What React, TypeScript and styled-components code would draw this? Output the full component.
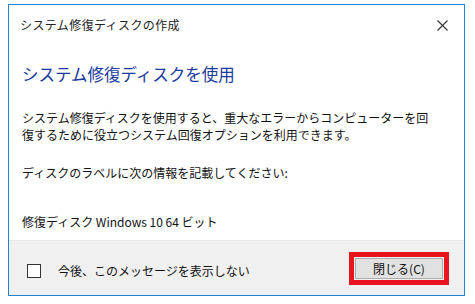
import React from "react";
import styled, { createGlobalStyle } from "styled-components";

const Global = createGlobalStyle`
  html, body { margin: 0; padding: 0; background: #ffffff; }
  body { font-family: "Noto Sans CJK JP", "Noto Sans", sans-serif; }
`;

const Page = styled.div`
  padding: 4px 0 0 8px;
`;

const Window = styled.div`
  box-sizing: border-box;
  width: 457px;
  height: 292px;
  border: 1px solid #1883d7;
  background: #ffffff;
  display: flex;
  flex-direction: column;
`;

const TitleBar = styled.div`
  height: 40px;
  display: flex;
  align-items: center;
  justify-content: space-between;
  padding: 0 12px 0 11px;
`;

const Title = styled.span`
  font-size: 12px;
  line-height: 16px;
  color: #222222;
  letter-spacing: 0.4px;
`;

const CloseButton = styled.span`
  width: 20px;
  height: 20px;
  display: flex;
  align-items: center;
  justify-content: center;
`;

const Content = styled.div`
  flex: 1;
  padding: 17px 0 0 13px;
  display: flex;
  flex-direction: column;
`;

const Heading = styled.div`
  font-size: 16.5px;
  line-height: 24px;
  color: #1a3a9e;
`;

const Text = styled.div<{ $gap: number }>`
  margin-top: ${(p) => p.$gap}px;
  font-size: 12px;
  line-height: 17px;
  color: #111111;
`;

const Footer = styled.div`
  height: 55px;
  background: #f0f0f0;
  border-top: 1px solid #e6e6e6;
  box-sizing: border-box;
  display: flex;
  align-items: center;
  padding: 0 21px 0 18px;
`;

const CheckRow = styled.label`
  display: flex;
  align-items: center;
  gap: 17px;
  margin-top: 5px;
  flex: 1;
`;

const Box = styled.span`
  box-sizing: border-box;
  width: 14px;
  height: 14px;
  border: 1px solid #333333;
  background: #ffffff;
`;

const CheckLabel = styled.span`
  font-size: 12px;
  line-height: 16px;
  color: #111111;
`;

const Button = styled.button`
  box-sizing: border-box;
  width: 88px;
  height: 21px;
  background: #e1e1e1;
  border: 1px solid #adadad;
  font-family: "Noto Sans CJK JP", "Noto Sans", sans-serif;
  font-size: 12px;
  line-height: 17px;
  color: #111111;
  padding: 0;
  outline: 5px solid #e8151f;
  outline-offset: 1px;
`;

export default function App() {
  return (
    <>
      <Global />
      <Page>
        <Window>
          <TitleBar>
            <Title>システム修復ディスクの作成</Title>
            <CloseButton>
              <svg width="11" height="11" viewBox="0 0 11 11">
                <path d="M0.5 0.5 L10.5 10.5 M10.5 0.5 L0.5 10.5" stroke="#333" strokeWidth="1.1" fill="none" />
              </svg>
            </CloseButton>
          </TitleBar>
          <Content>
            <Heading>システム修復ディスクを使用</Heading>
            <Text $gap={23}>
              システム修復ディスクを使用すると、重大なエラーからコンピューターを回
              <br />
              復するために役立つシステム回復オプションを利用できます。
            </Text>
            <Text $gap={21}>ディスクのラベルに次の情報を記載してください:</Text>
            <Text $gap={32}>修復ディスク Windows 10 64 ビット</Text>
          </Content>
          <Footer>
            <CheckRow>
              <Box />
              <CheckLabel>今後、このメッセージを表示しない</CheckLabel>
            </CheckRow>
            <Button>閉じる(C)</Button>
          </Footer>
        </Window>
      </Page>
    </>
  );
}
